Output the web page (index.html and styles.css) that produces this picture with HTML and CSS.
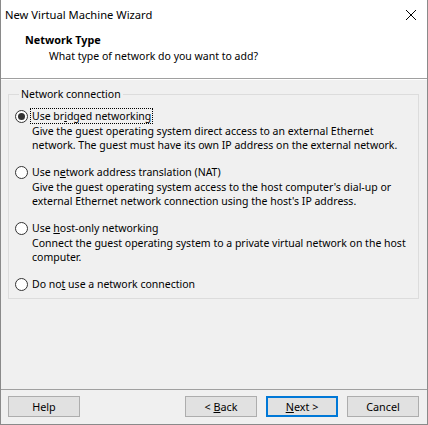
FILE: index.html
```html
<!DOCTYPE html>
<html>
<head>
<meta charset="utf-8">
<link rel="stylesheet" href="styles.css">
</head>
<body>
<div class="window">
  <div class="titlebar">
    <span class="title">New Virtual Machine Wizard</span>
    <svg class="close" width="12" height="12" viewBox="0 0 12 12"><path d="M1 1 L11 11 M11 1 L1 11" stroke="#000" stroke-width="1" fill="none"/></svg>
  </div>
  <div class="header">
    <div class="h-title">Network Type</div>
    <div class="h-sub">What type of network do you want to add?</div>
  </div>
  <div class="body">
    <fieldset class="group">
      <legend>Network connection</legend>
      <div class="option">
        <div class="row"><span class="radio checked"></span><span class="label focus">Use br<u>i</u>dged networking</span></div>
        <div class="desc">Give the guest operating system direct access to an external Ethernet<br>network. The guest must have its own IP address on the external network.</div>
      </div>
      <div class="option">
        <div class="row"><span class="radio"></span><span class="label">Use n<u>e</u>twork address translation (NAT)</span></div>
        <div class="desc">Give the guest operating system access to the host computer's dial-up or<br>external Ethernet network connection using the host's IP address.</div>
      </div>
      <div class="option">
        <div class="row"><span class="radio"></span><span class="label">Use <u>h</u>ost-only networking</span></div>
        <div class="desc">Connect the guest operating system to a private virtual network on the host<br>computer.</div>
      </div>
      <div class="option">
        <div class="row"><span class="radio"></span><span class="label">Do no<u>t</u> use a network connection</span></div>
      </div>
    </fieldset>
  </div>
  <div class="footer">
    <button class="btn">Help</button>
    <div class="spacer"></div>
    <button class="btn">&lt; <u>B</u>ack</button>
    <button class="btn default"><u>N</u>ext &gt;</button>
    <button class="btn">Cancel</button>
  </div>
</div>
</body>
</html>
```
FILE: styles.css
```css
* { box-sizing: border-box; }
html, body { margin: 0; padding: 0; background: #f0f0f0; }
body { font-family: "Noto Sans", "Open Sans", sans-serif; font-size: 10.5px; color: #000; white-space: nowrap; }
.window {
  width: 428px; height: 425px;
  border-left: 1px solid #8a8a8a; border-right: 1px solid #8a8a8a; border-bottom: 1px solid #8a8a8a;
  display: flex; flex-direction: column; background: #f0f0f0;
}
.titlebar {
  height: 30px; background: #fff; display: flex; align-items: center;
  padding-left: 4px; padding-right: 10px;
}
.title { flex: 1; line-height: 16px; font-size: 11.2px; }
.close { display: block; }
.header {
  height: 49px; background: #fff; border-bottom: 1px solid #a0a0a0;
  padding: 2px 0 0 24px;
}
.h-title { font-weight: bold; line-height: 16px; font-size: 10.8px; }
.h-sub { line-height: 16px; padding-left: 24px; }
.body { flex: 1; padding: 7px 8px 0 7px; border-top: 1px solid #fff; }
.group {
  margin: 0; padding: 7px 0 12px 6px; height: 212px;
  border: 1px solid #dcdcdc; border-radius: 0;
}
legend { padding: 0 2px; margin-left: 4px; line-height: 14px; }
.option { margin-bottom: 12px; }
.row { display: flex; align-items: center; height: 16px; }
.radio {
  width: 13px; height: 13px; border-radius: 50%; border: 1px solid #333;
  background: #fff; display: inline-flex; align-items: center; justify-content: center;
  margin-right: 2px; flex: none;
}
.radio.checked::after {
  content: ""; width: 7px; height: 7px; border-radius: 50%; background: #333;
}
.label { padding: 0 1px; line-height: 14px; border: 1px dotted transparent; }
.label.focus { border-color: #000; }
.desc { padding-left: 17px; line-height: 14px; }
.footer {
  height: 35px; border-top: 1px solid #a0a0a0; display: flex; align-items: center;
  padding: 0 8px 2px 7px; gap: 9px;
}
.spacer { flex: 1; }
.btn {
  width: 72px; height: 21px; font: inherit; font-size: 10.8px; background: #e1e1e1;
  border: 1px solid #adadad; padding: 0; color: #000;
}
.btn.default { border: 2px solid #0078d7; }
```
